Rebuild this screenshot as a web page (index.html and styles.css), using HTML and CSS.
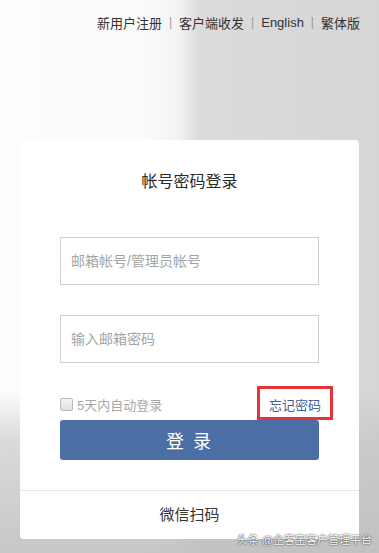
FILE: index.html
```html
<!DOCTYPE html>
<html lang="zh-CN">
<head>
<meta charset="utf-8">
<title>帐号密码登录</title>
<link rel="stylesheet" href="styles.css">
</head>
<body>
<div class="page">
  <nav class="topnav">
    <a class="navlink">新用户注册</a><span class="sep">|</span>
    <a class="navlink">客户端收发</a><span class="sep">|</span>
    <a class="navlink">English</a><span class="sep">|</span>
    <a class="navlink">繁体版</a>
  </nav>

  <div class="card">
    <h1 class="title">帐号密码登录</h1>
    <div class="field">邮箱帐号/管理员帐号</div>
    <div class="field field-second">输入邮箱密码</div>
    <div class="row">
      <label class="remember"><span class="checkbox"></span>5天内自动登录</label>
      <a class="forgot">忘记密码</a>
    </div>
    <button class="btn">登 录</button>
    <div class="divider"></div>
    <div class="wechat">微信扫码</div>
    <div class="highlight"></div>
  </div>

  <div class="watermark">头条 @企客宝客户管理平台</div>
</div>
</body>
</html>
```
FILE: styles.css
```css
html, body {
  margin: 0;
  padding: 0;
}
body {
  width: 379px;
  height: 553px;
  overflow: hidden;
  font-family: "Liberation Sans", "Noto Sans CJK SC", sans-serif;
}
.page {
  position: relative;
  width: 379px;
  height: 553px;
  background:
    linear-gradient(to bottom, rgba(200,200,200,0) 0, rgba(200,200,200,0) 390px, rgba(195,195,195,0.6) 440px, rgba(190,190,190,0.85) 553px),
    linear-gradient(to right, #fdfdfd 0, #fafafa 150px, #f2f2f2 180px, #dcdcdc 198px, #d9d9d9 260px, #d6d6d6 379px);
}
.topnav {
  display: flex;
  justify-content: flex-end;
  align-items: center;
  height: 44px;
  padding-right: 19px;
  font-size: 13px;
  color: #333;
}
.navlink {
  color: #333;
  text-decoration: none;
}
.sep {
  color: #999;
  margin: 0 7px;
  font-size: 12px;
}
.card {
  position: relative;
  margin: 96px 0 0 20px;
  width: 339px;
  height: 399px;
  background: #fff;
  border-radius: 4px;
  box-sizing: border-box;
  padding: 32px 0 0;
}
.title {
  margin: 0;
  height: 20px;
  line-height: 20px;
  text-align: center;
  font-size: 16px;
  font-weight: normal;
  color: #2a2a2a;
}
.field {
  margin: 45px 40px 0;
  height: 48px;
  box-sizing: border-box;
  border: 1px solid #cfcfcf;
  padding-left: 10px;
  line-height: 46px;
  font-size: 14px;
  color: #a5a5a5;
}
.field-second {
  margin-top: 30px;
}
.row {
  display: flex;
  justify-content: space-between;
  align-items: center;
  margin: 31px 40px 0;
  height: 20px;
}
.remember {
  display: flex;
  align-items: center;
  font-size: 13px;
  color: #a8a8a8;
}
.checkbox {
  width: 11px;
  height: 11px;
  border: 1px solid #b9b9b9;
  border-radius: 2px;
  background: linear-gradient(#f4f4f4, #dedede);
  margin-right: 4px;
}
.forgot {
  font-size: 13px;
  color: #3f5f92;
  margin-right: -2px;
}
.btn {
  display: block;
  margin: 6px 40px 0;
  width: 259px;
  height: 40px;
  border: 0;
  border-radius: 3px;
  background: #4b6ea4;
  color: #fff;
  font-family: "Liberation Sans", "Noto Sans CJK SC", sans-serif;
  font-size: 18px;
  letter-spacing: 2px;
}
.divider {
  margin-top: 30px;
  height: 1px;
  background: #e8e8e8;
}
.wechat {
  height: 48px;
  line-height: 48px;
  text-align: center;
  font-size: 15px;
  color: #333;
}
.highlight {
  position: absolute;
  left: 237px;
  top: 246px;
  width: 70px;
  height: 28px;
  border: 3px solid #e5353b;
}
.watermark {
  position: absolute;
  right: 7px;
  bottom: 6px;
  font-size: 11px;
  color: #fff;
  text-shadow: 0 0 2px rgba(0,0,0,0.7), 0 0 1px rgba(0,0,0,0.6);
}
```
